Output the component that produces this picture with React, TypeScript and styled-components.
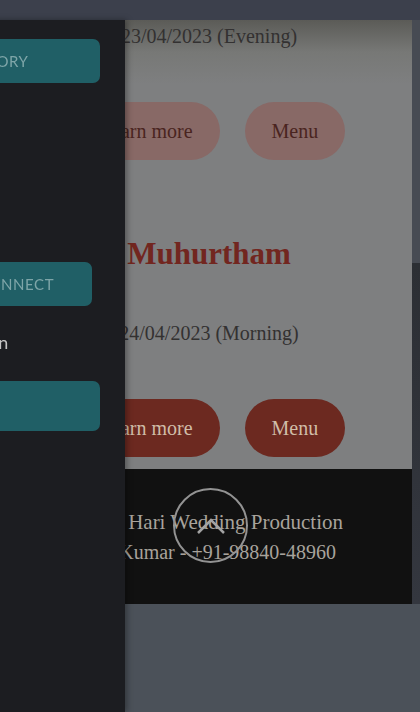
import React from 'react';
import styled, { createGlobalStyle } from 'styled-components';

const GlobalStyle = createGlobalStyle`
  html, body {
    margin: 0;
    padding: 0;
  }
  body {
    background: #4b5159;
    font-family: 'Liberation Serif', 'DejaVu Serif', serif;
    overflow: hidden;
  }
`;

const Shell = styled.div`
  min-height: 712px;
  display: flex;
  flex-direction: column;
`;

const TopBar = styled.header`
  height: 20px;
  flex: none;
  background: #3c404c;
`;

const Body = styled.div`
  display: grid;
  grid-template-columns: 412px 8px;
`;

const Gutter = styled.div`
  background: linear-gradient(180deg, #474b53 0, #474b53 243px, #2c2f34 243px, #34373f 100%);
`;

const Card = styled.main`
  display: flex;
  flex-direction: column;
  background: linear-gradient(180deg, #5b5b57 0, #777876 32px, #7e7f80 64px, #7e7f80 100%);
`;

const Content = styled.div`
  display: flex;
  flex-direction: column;
  align-items: center;
  padding: 2px 4px 12px 10px;
  text-align: center;
`;

const Event = styled.section`
  display: flex;
  flex-direction: column;
  align-items: center;

  & + & {
    margin-top: 74px;
  }
`;

const Title = styled.h2`
  margin: 0 0 45px;
  font-size: 31px;
  line-height: 40px;
  font-weight: 700;
  color: #72261f;
`;

const DateLine = styled.p`
  margin: 0;
  font-size: 20px;
  line-height: 28px;
  color: #333131;
`;

const Actions = styled.div`
  display: flex;
  gap: 25px;
  margin-top: 52px;
`;

const Pill = styled.a<{ $solid?: boolean }>`
  display: flex;
  align-items: center;
  height: 58px;
  padding: 0 27px;
  border-radius: 29px;
  font-size: 20px;
  text-decoration: none;
  background: ${(p) => (p.$solid ? '#6c2920' : '#886966')};
  color: ${(p) => (p.$solid ? '#d0bda8' : '#4a2420')};
`;

const Footer = styled.footer`
  padding: 38px 4px 37px 0;
  background: #111111;
  text-align: center;
  line-height: 30px;
  color: #a8a39c;
`;

const FooterLine = styled.div<{ $size: number }>`
  font-size: ${(p) => p.$size}px;
`;

const Drawer = styled.nav`
  position: fixed;
  top: 20px;
  left: 0;
  bottom: 0;
  width: 250px;
  transform: translateX(-125px);
  background: #1c1d21;
  box-shadow: 2px 0 6px rgba(0, 0, 0, 0.35);
  display: flex;
  flex-direction: column;
  padding: 19px 25px 0 25px;
  box-sizing: border-box;
  font-family: Lato, 'Open Sans', sans-serif;
`;

const NavButton = styled.a<{ $inset: number; $height: number; $trim?: number; $gap?: number }>`
  display: flex;
  align-items: center;
  height: ${(p) => p.$height}px;
  margin: ${(p) => p.$gap ?? 0}px ${(p) => p.$trim ?? 0}px 0 0;
  padding-left: ${(p) => p.$inset}px;
  border-radius: 7px;
  background: #205f66;
  color: #7ea5a8;
  font-size: 15px;
  letter-spacing: 0.6px;
  text-transform: uppercase;
  text-decoration: none;
`;

const NavLink = styled.a`
  margin: 24px 0 0 56px;
  font-size: 18px;
  line-height: 24px;
  color: #c4c4c4;
  text-decoration: none;
`;

const ScrollTop = styled.button`
  position: fixed;
  left: 173px;
  top: 488px;
  width: 75px;
  height: 75px;
  padding: 0;
  border: 2px solid #939393;
  border-radius: 50%;
  background: transparent;
  display: grid;
  place-items: center;
  box-sizing: border-box;
`;

const events = [
  { title: '', date: '23/04/2023 (Evening)', solid: false },
  { title: 'Muhurtham', date: '24/04/2023 (Morning)', solid: true },
];

export default function App() {
  return (
    <>
      <GlobalStyle />
      <Shell>
        <TopBar />
        <Body>
          <Card>
            <Content>
              {events.map((ev) => (
                <Event key={ev.date}>
                  {ev.title && <Title>{ev.title}</Title>}
                  <DateLine>{ev.date}</DateLine>
                  <Actions>
                    <Pill $solid={ev.solid} href="#">Learn more</Pill>
                    <Pill $solid={ev.solid} href="#">Menu</Pill>
                  </Actions>
                </Event>
              ))}
            </Content>
            <Footer>
              <FooterLine $size={21}>©2023 Hari Wedding Production</FooterLine>
              <FooterLine $size={20}>Mani Kumar - +91-98840-48960</FooterLine>
            </Footer>
          </Card>
          <Gutter />
        </Body>
      </Shell>
      <Drawer>
        <NavButton href="#" $inset={40} $height={44}>Our Story</NavButton>
        <NavButton href="#" $inset={34} $height={44} $trim={8} $gap={179}>Let's Connect</NavButton>
        <NavLink href="#">Sign in</NavLink>
        <NavButton href="#" $inset={24} $height={50} $gap={27}>RSVP</NavButton>
      </Drawer>
      <ScrollTop aria-label="Back to top">
        <svg width="30" height="18" viewBox="0 0 30 18">
          <polyline points="2,16 15,3 28,16" fill="none" stroke="#a3a3a3" strokeWidth="2.5" />
        </svg>
      </ScrollTop>
    </>
  );
}
